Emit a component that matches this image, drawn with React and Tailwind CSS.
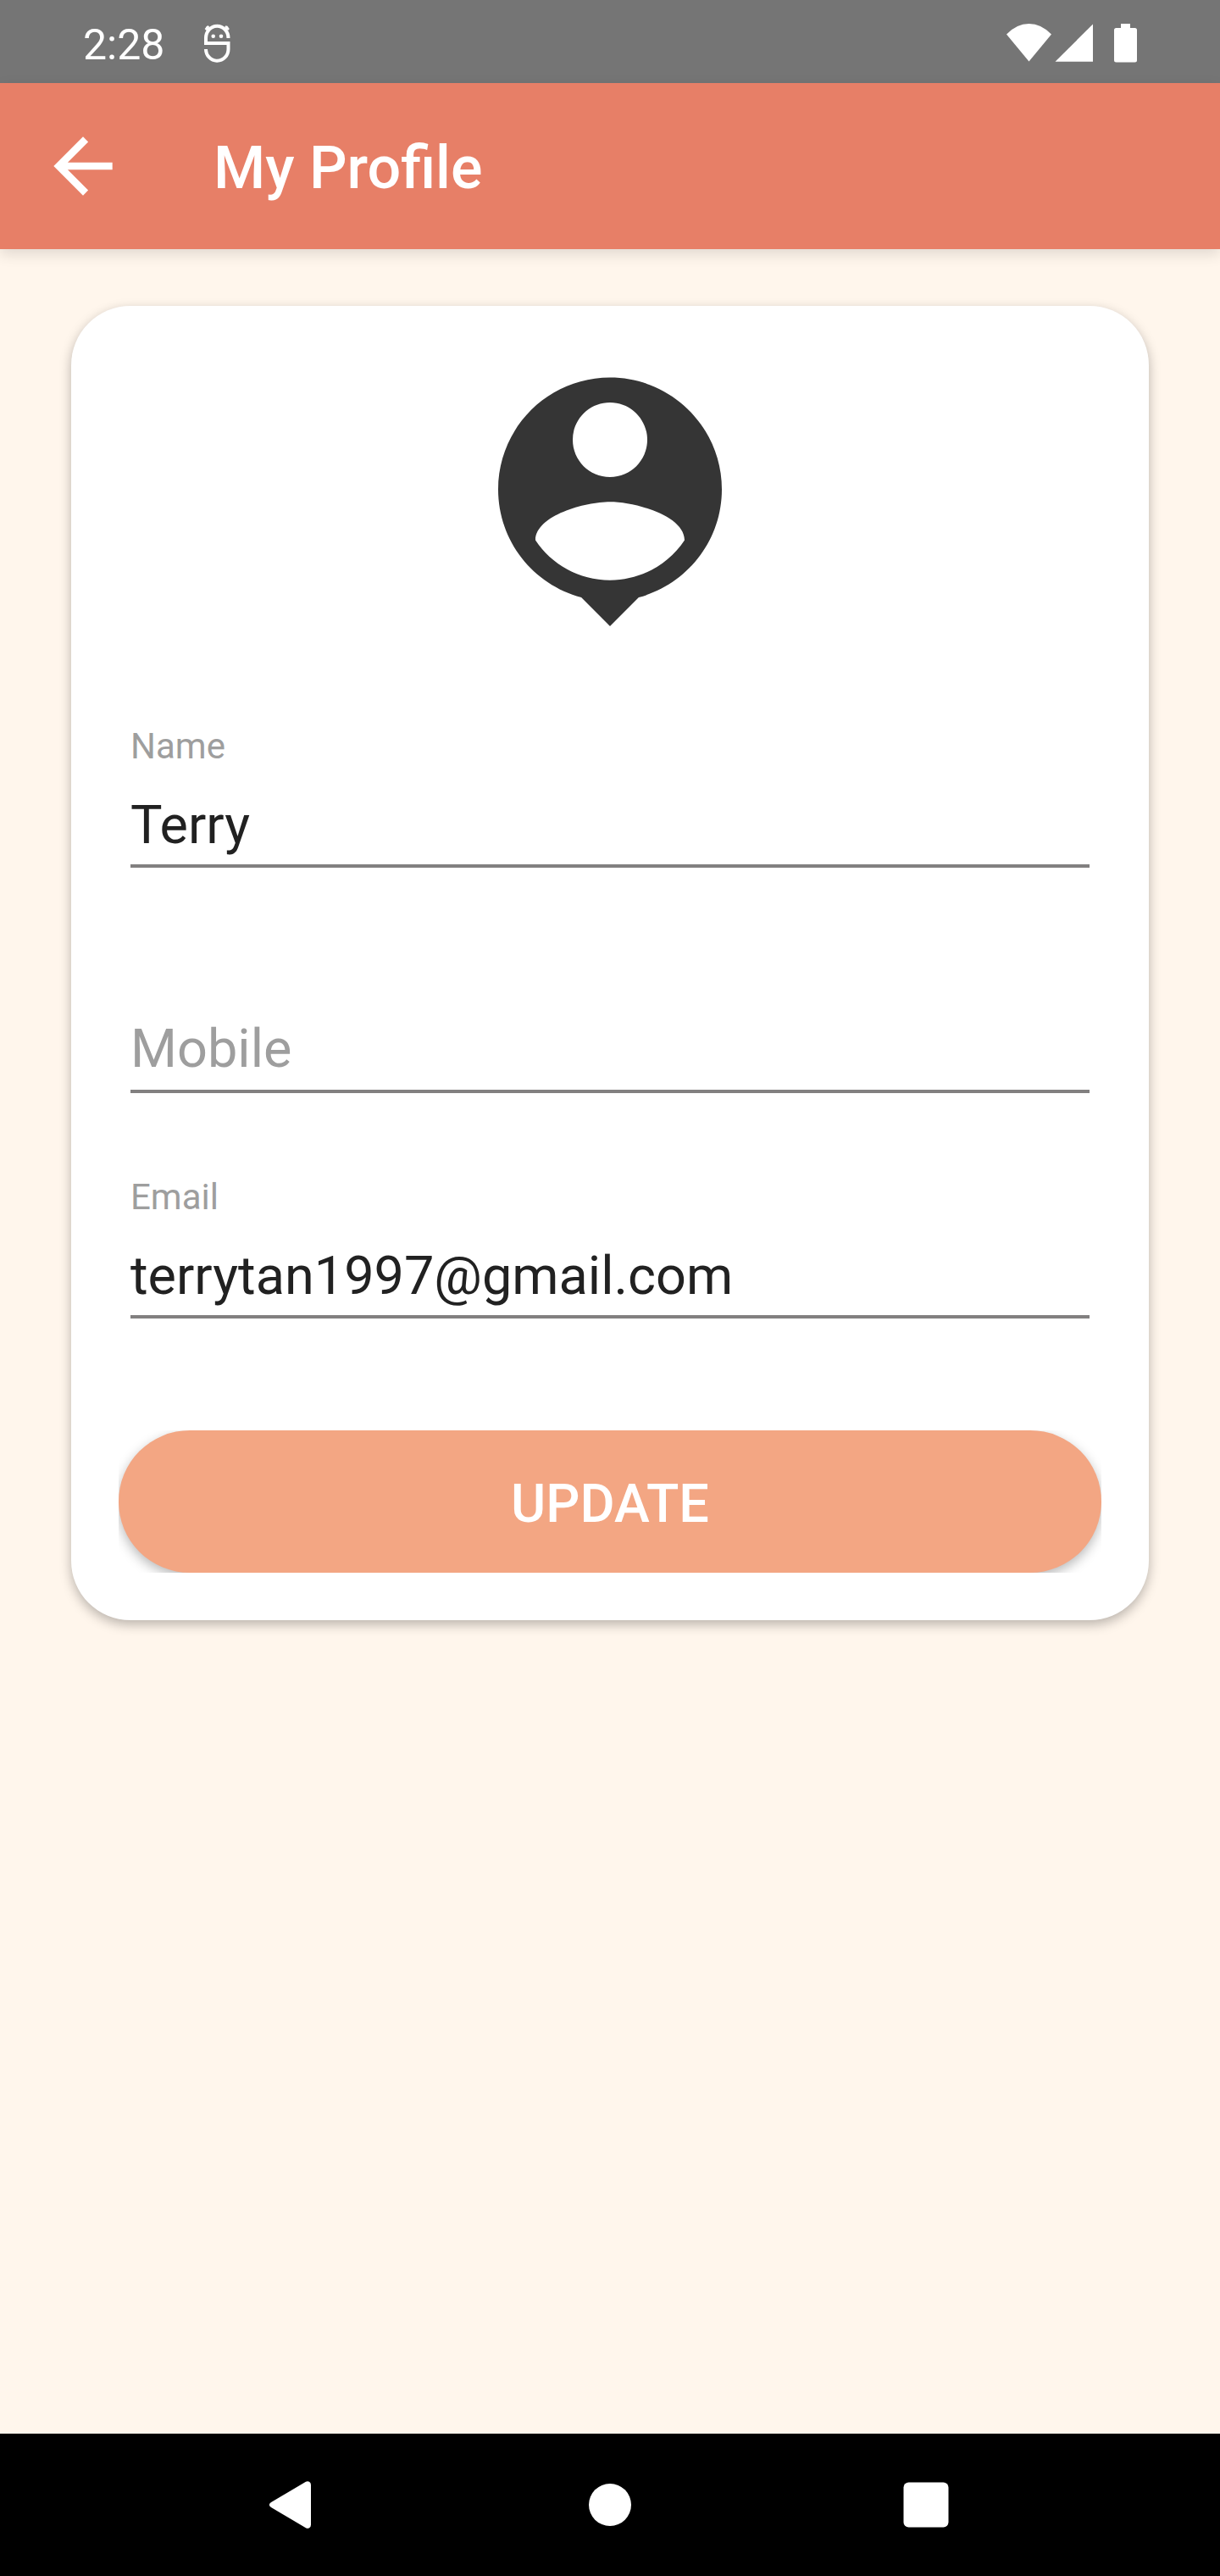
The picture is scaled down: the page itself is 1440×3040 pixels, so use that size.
import { useState } from "react";

function StatusBar() {
  return (
    <div className="flex h-[98px] shrink-0 items-center bg-[#757575] px-[98px] pt-1 text-white">
      <span className="pt-1 text-[50px] leading-[60px]">2:28</span>
      <svg className="ml-[46px] h-[46px] w-8" viewBox="0 0 32 46" fill="none" aria-hidden="true">
        <path d="M29.500 17A13.100 14 0 0 0 3 17V23H29.500V30A13.250 13.700 0 0 1 3 30" stroke="#fff" strokeWidth="4" />
        <path d="M3.500 3.500L8 8M2.500 7L6.500 3M29 3.500L24.500 8M30 7L26 3" stroke="#fff" strokeWidth="2.500" />
        <circle cx="11.700" cy="14.700" r="2.300" fill="#fff" />
        <circle cx="21" cy="14.700" r="2.300" fill="#fff" />
      </svg>
      <svg className="ml-auto h-[46px] w-[54px]" viewBox="0 0 54 46" fill="#fff" aria-hidden="true">
        <path d="M0 12.500Q12 0 26.500 0T53 12.500L26.500 44.500z" />
      </svg>
      <svg className="ml-0.5 h-[46px] w-[46px]" viewBox="0 0 46 46" fill="#fff" aria-hidden="true">
        <path d="M46 .5V44.700H1.500z" />
      </svg>
      <svg className="ml-6 h-[46px] w-7" viewBox="0 0 28 46" fill="#fff" aria-hidden="true">
        <path d="M9 0h11v5H25.500a2.500 2.500 0 0 1 2.500 2.500v35.500a2.500 2.500 0 0 1-2.500 2.500H3.500a2.500 2.500 0 0 1-2.500-2.500V7.500A2.500 2.500 0 0 1 3.500 5h5.500z" />
      </svg>
    </div>
  );
}

function AppBar() {
  return (
    <header className="relative flex h-[196px] shrink-0 items-center bg-[#e77f67] px-[46px] text-white shadow-[0_6px_16px_rgba(0,0,0,0.12)]">
      <button type="button" aria-label="Back" className="flex items-center justify-center">
        <svg className="h-[104px] w-[104px]" viewBox="0 0 24 24" fill="currentColor" aria-hidden="true">
          <path d="M20 11H7.830l5.590-5.590L12 4l-8 8 8 8 1.410-1.410L7.830 13H20z" />
        </svg>
      </button>
      <h1 className="ml-[102px] pt-1 text-[70px] leading-[84px] font-medium">My Profile</h1>
    </header>
  );
}

function Field({ id, label, type, initial }) {
  const [value, setValue] = useState(initial);
  return (
    <div className="flex h-[266px] flex-col">
      <label
        htmlFor={id}
        className={
          value
            ? "h-[82px] text-[42px] leading-[50px] text-[#9e9e9e]"
            : "invisible h-[82px] text-[42px] leading-[50px]"
        }
      >
        {label}
      </label>
      <input
        id={id}
        type={type}
        value={value}
        placeholder={label}
        onChange={(e) => setValue(e.target.value)}
        className="h-[86px] w-full border-b-4 border-[#828080] bg-transparent pb-3 text-[63px] leading-[70px] text-[#212121] outline-none placeholder-shown:pb-4 placeholder:text-[#9e9e9e]"
      />
    </div>
  );
}

function NavigationBar() {
  return (
    <nav className="flex h-[168px] shrink-0 items-center justify-between bg-black px-[310px] text-white">
      <button type="button" aria-label="Back">
        <svg className="h-14 w-16" viewBox="0 0 64 56" fill="currentColor" aria-hidden="true">
          <path d="M51 .7Q53 -.4 55 .7Q57 2 57 4.500V51.500Q57 54 55 55.300Q53 56.400 51 55.300L10 31Q7.800 29.500 7.800 28T10 25z" />
        </svg>
      </button>
      <button type="button" aria-label="Home">
        <svg className="h-14 w-16" viewBox="0 0 64 56" fill="currentColor" aria-hidden="true">
          <circle cx="32" cy="28" r="25" />
        </svg>
      </button>
      <button type="button" aria-label="Recent apps">
        <svg className="h-14 w-16" viewBox="0 0 64 56" fill="currentColor" aria-hidden="true">
          <rect x="0.500" y="1.500" width="53" height="53" rx="6" />
        </svg>
      </button>
    </nav>
  );
}

export default function App() {
  return (
    <div className="flex min-h-screen flex-col bg-[#fff6ec] font-[Roboto,sans-serif]">
      <StatusBar />
      <AppBar />
      <main className="flex-1 px-[84px] pt-[67px] pb-16">
        <form
          onSubmit={(e) => e.preventDefault()}
          className="rounded-[70px] bg-white p-14 shadow-[0_5px_14px_rgba(0,0,0,0.28)]"
        >
          <svg className="mx-auto h-[352px] w-[352px]" viewBox="0 0 24 24" fill="#353535" aria-label="Profile picture" role="img">
            <path d="M12 1.950c-4.970 0-9 4.030-9 9 0 4.170 2.840 7.670 6.690 8.690L12 21.950l2.310-2.310C18.160 18.620 21 15.120 21 10.950c0-4.970-4.030-9-9-9zm0 2c1.660 0 3 1.340 3 3s-1.340 3-3 3-3-1.340-3-3 1.340-3 3-3zm0 14.300c-2.500 0-4.710-1.280-6-3.220.030-1.990 4-3.080 6-3.080 1.990 0 5.970 1.090 6 3.080-1.290 1.940-3.500 3.220-6 3.220z" />
          </svg>
          <div className="px-[14px] pt-[87px] pb-[34px]">
            <Field id="name" label="Name" type="text" initial="Terry" />
            <Field id="mobile" label="Mobile" type="tel" initial="" />
            <Field id="email" label="Email" type="email" initial="terrytan1997@gmail.com" />
          </div>
          <div className="overflow-hidden">
            <button
              type="submit"
              className="block h-[168px] w-full rounded-full bg-[#f3a683] pt-1.5 text-[63px] font-medium text-white uppercase shadow-[0_5px_14px_rgba(0,0,0,0.28)]"
            >
              Update
            </button>
          </div>
        </form>
      </main>
      <NavigationBar />
    </div>
  );
}
